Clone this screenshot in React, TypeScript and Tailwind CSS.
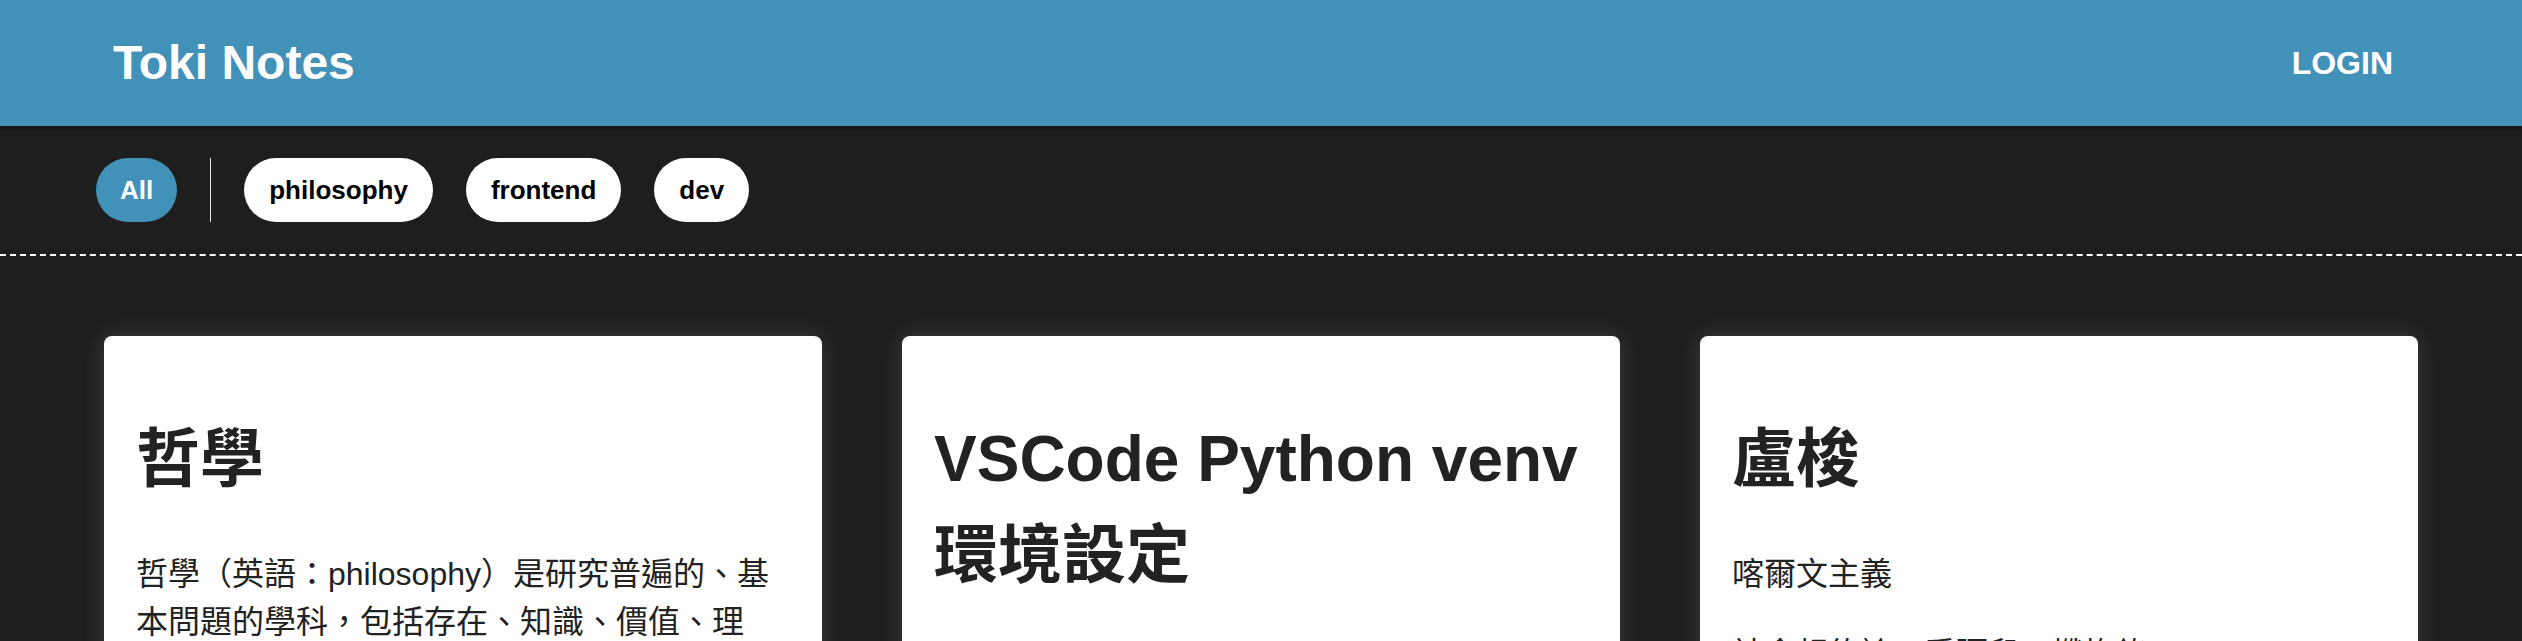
import React from 'react';

const tags = ['philosophy', 'frontend', 'dev'];

const notes = [
  {
    title: '哲學',
    body: [
      '哲學（英語：philosophy）是研究普遍的、基本問題的學科，包括存在、知識、價值、理智、心靈、語言等領域。哲學與其他學科不同之處在於其批判的方式、通常是系統化的方法，並以理性論證為基礎。',
    ],
  },
  {
    title: 'VSCode Python venv 環境設定',
    body: ['在專案資料夾中建立虛擬環境，並讓 VSCode 選擇對應的 Python 直譯器。'],
  },
  {
    title: '盧梭',
    body: ['喀爾文主義', '社會契約論、愛彌兒、懺悔錄', '啟蒙運動時期的法國思想家'],
  },
];

const App: React.FC = () => {
  return (
    <div className="min-h-screen bg-[#1e1e1e] font-['Liberation_Sans','Noto_Sans_CJK_TC',sans-serif]">
      <header className="relative z-10 h-[126px] bg-[#4291b8] flex items-center justify-between px-[113px] shadow-[0_2px_4px_rgba(0,0,0,0.35)]">
        <h1 className="text-[48px] font-bold text-white leading-none">Toki Notes</h1>
        <button className="px-4 text-[32px] font-bold text-white leading-none">LOGIN</button>
      </header>

      <nav className="flex items-center gap-[33px] px-[96px] py-8 border-b-2 border-dashed border-white">
        <button className="h-16 px-6 rounded-full bg-[#4291b8] text-white text-[26px] font-bold">All</button>
        <div className="w-px h-16 bg-[#e5e5e5]"></div>
        {tags.map((tag) => (
          <button key={tag} className="h-16 px-[25px] rounded-full bg-white text-black text-[26px] font-bold">
            {tag}
          </button>
        ))}
      </nav>

      <main className="grid grid-cols-3 gap-20 px-[104px] pt-20 pb-20">
        {notes.map((note) => (
          <article
            key={note.title}
            className="bg-white rounded-lg px-8 pt-8 pb-8 text-[#222] shadow-[0_0_24px_rgba(235,245,240,0.15)]"
          >
            <h2 className="mt-[43px] mb-[43px] text-[64px] leading-[96px] font-bold">{note.title}</h2>
            {note.body.map((text, i) => (
              <p key={i} className="mb-8 text-[32px] leading-[48px]">
                {text}
              </p>
            ))}
          </article>
        ))}
      </main>
    </div>
  );
};

export default App;
